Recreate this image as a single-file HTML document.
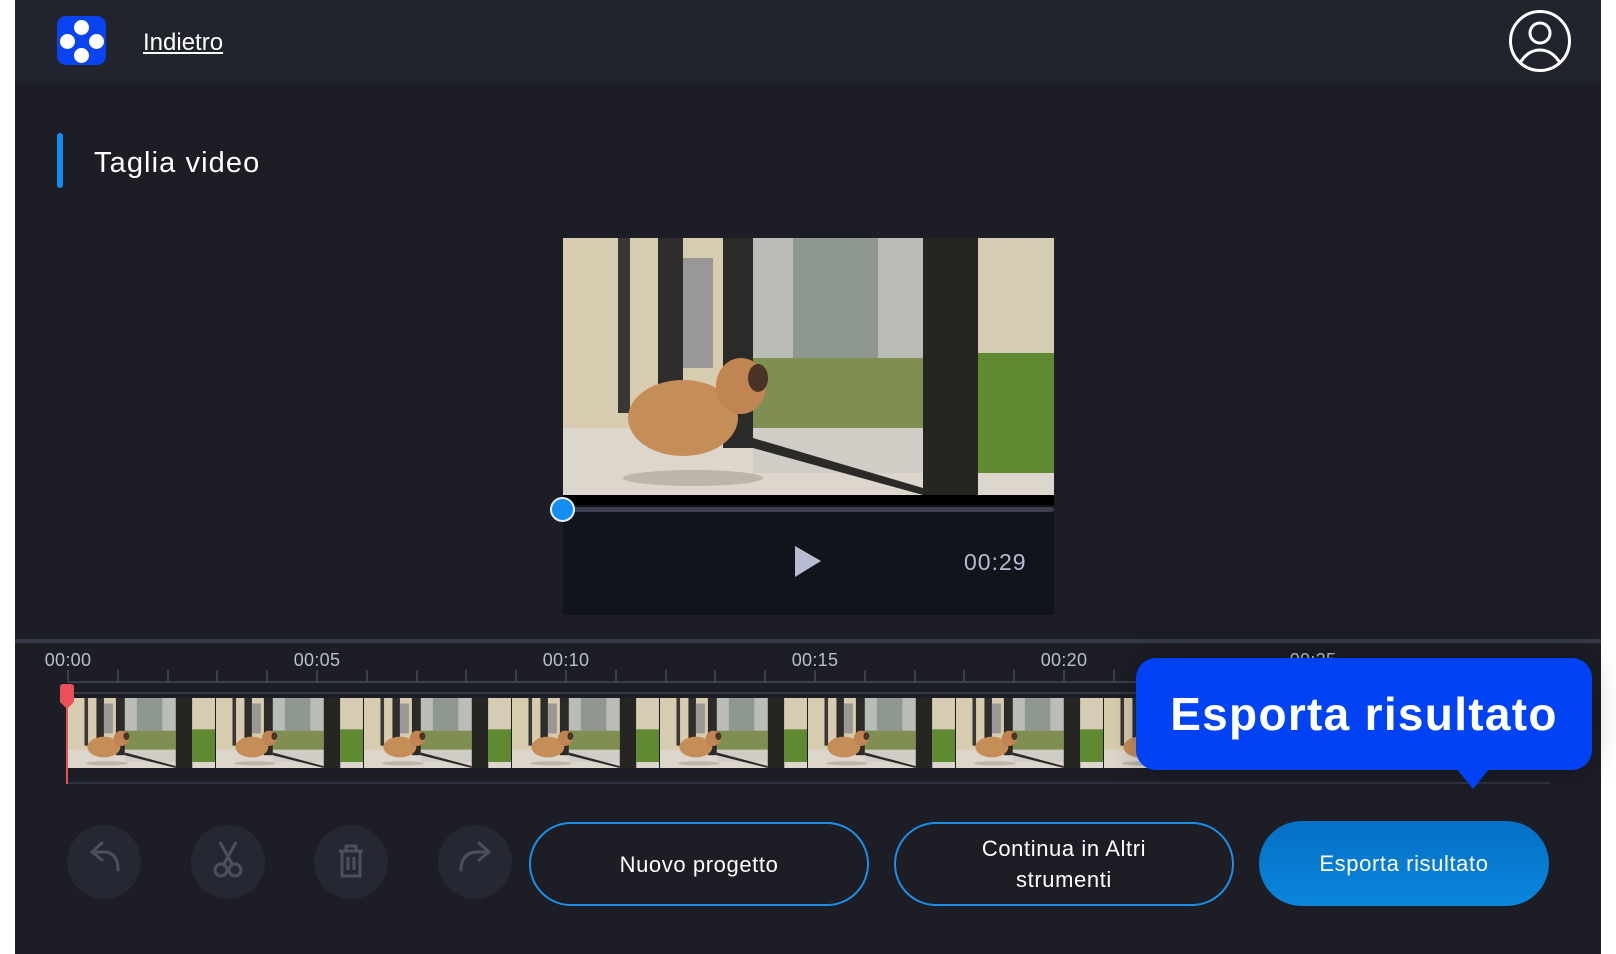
<!DOCTYPE html>
<html><head><meta charset="utf-8"><style>
*{margin:0;padding:0;box-sizing:border-box}
body{width:1616px;height:954px;background:#fff;position:relative;overflow:hidden;font-family:"Liberation Sans",sans-serif}
.app{position:absolute;left:15px;top:0;width:1586px;height:954px;background:#1c1d25}
.hdr{position:absolute;left:15px;top:0;width:1586px;height:83px;background:#22242d}
.abs{position:absolute}
.btn{position:absolute;border:2px solid #1a8fe8;border-radius:44px;color:#fff;font-size:22px;display:flex;align-items:center;justify-content:center;text-align:center;line-height:31px;letter-spacing:0.6px}
.circ{position:absolute;width:74px;height:74px;border-radius:50%;background:#252832;top:825px}
.lbl{position:absolute;top:650px;color:#b9bfcc;font-size:18px;width:80px;text-align:center;letter-spacing:0.3px}
</style></head><body>
<div class="app"></div>
<div class="hdr"></div>
<div class="abs" style="left:57px;top:16px;width:49px;height:49px;border-radius:9px;background:#0a43f0"></div>
<div class="abs" style="left:74px;top:20px;width:15px;height:15px;border-radius:50%;background:#fff"></div>
<div class="abs" style="left:74px;top:48px;width:15px;height:15px;border-radius:50%;background:#fff"></div>
<div class="abs" style="left:60px;top:34px;width:15px;height:15px;border-radius:50%;background:#fff"></div>
<div class="abs" style="left:89px;top:34px;width:15px;height:15px;border-radius:50%;background:#fff"></div>
<div class="abs" style="left:143px;top:29px;color:#fff;font-size:24px;text-decoration:underline">Indietro</div>
<svg class="abs" style="left:1508px;top:9px" width="64" height="64" viewBox="0 0 64 64" fill="none" stroke="#fff" stroke-width="3"><circle cx="32" cy="32" r="29.5"/><circle cx="32" cy="24" r="10"/><path d="M12 54 C18 44 25 41 32 41 C39 41 46 44 52 54"/></svg>
<div class="abs" style="left:57px;top:133px;width:6px;height:55px;border-radius:3px;background:#118ef0"></div>
<div class="abs" style="left:94px;top:147px;color:#fff;font-size:29px;letter-spacing:1.1px">Taglia video</div>

<svg width="0" height="0" style="position:absolute"><defs>
<symbol id="sc" viewBox="0 0 491 257" preserveAspectRatio="none">
<rect width="491" height="257" fill="#d8ccb0"/>
<rect x="0" y="190" width="491" height="67" fill="#dcd6cc"/>
<rect x="55" y="0" width="12" height="175" fill="#3a3835"/>
<rect x="95" y="0" width="25" height="170" fill="#2e2d2b"/>
<rect x="120" y="20" width="30" height="110" fill="#9a9896"/>
<rect x="160" y="0" width="30" height="210" fill="#2a2a28"/>
<rect x="190" y="0" width="170" height="125" fill="#b9bdb6"/>
<rect x="230" y="0" width="85" height="120" fill="#8e9890"/>
<rect x="190" y="120" width="170" height="70" fill="#7f8f52"/>
<rect x="190" y="190" width="170" height="45" fill="#cfcdc6"/>
<path d="M190 200 L360 250 L360 257 L190 210Z" fill="#2b2a28"/>
<rect x="360" y="0" width="55" height="257" fill="#252522"/>
<rect x="415" y="0" width="76" height="120" fill="#d6ccb4"/>
<rect x="415" y="115" width="76" height="120" fill="#5f8a32"/>
<ellipse cx="120" cy="180" rx="55" ry="38" fill="#c58d58"/>
<ellipse cx="178" cy="148" rx="25" ry="28" fill="#c08552"/>
<ellipse cx="195" cy="140" rx="10" ry="14" fill="#4a3428"/>
<ellipse cx="130" cy="240" rx="70" ry="8" fill="#9a9488" opacity=".5"/>
</symbol></defs></svg>

<div class="abs" style="left:563px;top:238px;width:491px;height:377px;background:#12141b"></div>
<svg class="abs" style="left:563px;top:238px" width="491" height="257"><use href="#sc" width="491" height="257"/></svg>
<div class="abs" style="left:563px;top:495px;width:491px;height:10px;background:#000"></div>
<div class="abs" style="left:563px;top:507px;width:491px;height:5px;border-radius:3px;background:#3b3f4e"></div>
<div class="abs" style="left:550px;top:497px;width:25px;height:25px;border-radius:50%;background:#118ef0;border:2px solid #e8eefc"></div>
<svg class="abs" style="left:793px;top:544px" width="30" height="36"><path d="M2 2 L28 17 L2 33Z" fill="#b8bcd2"/></svg>
<div class="abs" style="left:964px;top:549px;color:#b8bcd2;font-size:23px;letter-spacing:1px">00:29</div>

<div class="abs" style="left:15px;top:639px;width:1586px;height:4px;background:#353a48"></div>
<div class="lbl" style="left:28px">00:00</div>
<div class="lbl" style="left:277px">00:05</div>
<div class="lbl" style="left:526px">00:10</div>
<div class="lbl" style="left:775px">00:15</div>
<div class="lbl" style="left:1024px">00:20</div>
<div class="lbl" style="left:1273px">00:25</div>
<svg class="abs" style="left:0;top:665px" width="1616" height="20" stroke="#454b5a" stroke-width="1.5">
<line x1="68" y1="17" x2="1550" y2="17"/>
<path d="M68 5V17M118 5V17M168 5V17M217 5V17M267 5V17M317 5V17M367 5V17M417 5V17M466 5V17M516 5V17M566 5V17M616 5V17M666 5V17M715 5V17M765 5V17M815 5V17M865 5V17M915 5V17M964 5V17M1014 5V17M1064 5V17M1114 5V17M1164 5V17M1213 5V17M1263 5V17M1313 5V17"/>
</svg>
<div class="abs" style="left:68px;top:692px;width:1500px;height:80px;border-top:2px solid #333847"></div>
<svg class="abs" style="left:68px;top:698px" width="1100" height="70">
<use href="#sc" x="0" width="147" height="70"/><use href="#sc" x="148" width="147" height="70"/><use href="#sc" x="296" width="147" height="70"/><use href="#sc" x="444" width="147" height="70"/><use href="#sc" x="592" width="147" height="70"/><use href="#sc" x="740" width="147" height="70"/><use href="#sc" x="888" width="147" height="70"/><use href="#sc" x="1036" width="147" height="70"/>
</svg>
<div class="abs" style="left:68px;top:782px;width:1482px;height:2px;background:#2e3341"></div>
<div class="abs" style="left:66px;top:690px;width:2px;height:94px;background:#e9505a"></div>
<svg class="abs" style="left:60px;top:684px" width="14" height="26"><path d="M0 3Q0 0 3 0H11Q14 0 14 3V18L7 25L0 18Z" fill="#e9505a"/></svg>

<div class="circ" style="left:67px"></div><div class="circ" style="left:191px"></div><div class="circ" style="left:314px"></div><div class="circ" style="left:438px"></div>
<svg class="abs" style="left:68px;top:826px" width="72" height="72" fill="none" stroke="#4b5060" stroke-width="3" stroke-linecap="round" stroke-linejoin="round"><path d="M24 26 L34 17 M24 26 L34 34 M24 26 H38 Q50 28 50 44"/></svg>
<svg class="abs" style="left:192px;top:826px" width="72" height="72" fill="none" stroke="#4b5060" stroke-width="3"><path d="M28 16 L40 38 M44 16 L32 38"/><circle cx="29" cy="44" r="6"/><circle cx="43" cy="44" r="6"/></svg>
<svg class="abs" style="left:315px;top:826px" width="72" height="72" fill="none" stroke="#4b5060" stroke-width="3"><path d="M24 25H48M31 25V20H41V25M27 25V50H45V25M33 31V44M39 31V44"/></svg>
<svg class="abs" style="left:439px;top:826px" width="72" height="72" fill="none" stroke="#4b5060" stroke-width="3" stroke-linecap="round" stroke-linejoin="round"><path d="M50 26 L40 17 M50 26 L40 34 M50 26 H36 Q22 28 22 44"/></svg>

<div class="btn" style="left:529px;top:822px;width:340px;height:84px">Nuovo progetto</div>
<div class="btn" style="left:894px;top:822px;width:340px;height:84px">Continua in Altri<br>strumenti</div>
<div class="btn" style="left:1259px;top:821px;width:290px;height:85px;border:none;background:linear-gradient(#0570c6,#0a86dc)">Esporta risultato</div>

<div class="abs" style="left:1136px;top:658px;width:456px;height:112px;border-radius:20px;background:#0042f4;color:#fff;font-size:46px;font-weight:bold;display:flex;align-items:center;justify-content:center;letter-spacing:1.3px;box-shadow:0 0 30px rgba(0,0,0,.25)">Esporta risultato</div>
<svg class="abs" style="left:1456px;top:768px" width="34" height="22"><path d="M0 0H34L17 21Z" fill="#0042f4"/></svg>
</body></html>
